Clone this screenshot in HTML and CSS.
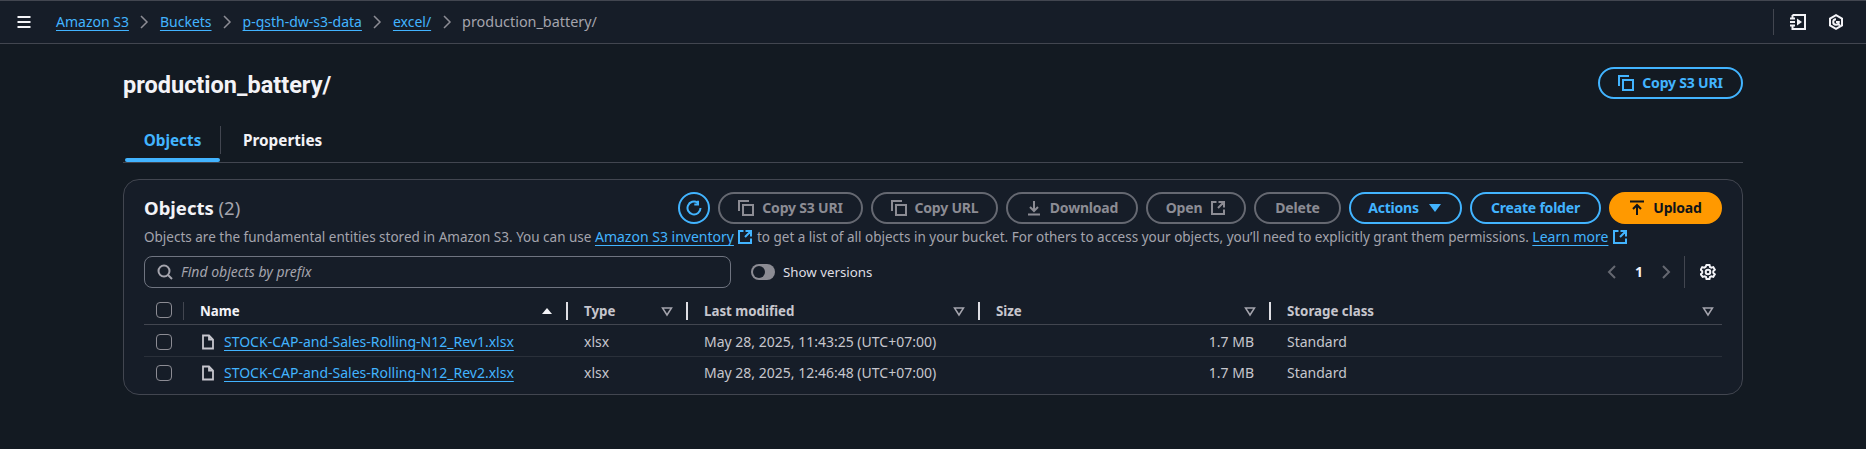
FILE: index.html
```html
<!DOCTYPE html>
<html lang="en">
<head>
  <meta charset="UTF-8">
  <title>production_battery/ - S3 bucket</title>
  <link rel="stylesheet" href="styles.css">
</head>
<body>
  <svg class="defs" width="0" height="0">
    <symbol id="i-copy" viewBox="0 0 16 16"><path d="M1 11V1h10"/><rect x="5" y="5" width="10" height="10"/></symbol>
    <symbol id="i-ext" viewBox="0 0 16 16"><path d="M14 7.500V2H8.500M14 2 8 8M6.500 2H2v12h12V9.500"/></symbol>
    <symbol id="i-download" viewBox="0 0 16 16"><path d="M8 1v10M4 7l4 4 4-4M2 14.500h12"/></symbol>
    <symbol id="i-upload" viewBox="0 0 16 16"><path d="M1 1.500h14M8 5v10M4 9l4-4 4 4"/></symbol>
    <symbol id="i-refresh" viewBox="0 0 16 16"><path d="M14.500 8A6.500 6.500 0 1 1 11.600 2.600M12 .8v3.700H8.300"/></symbol>
    <symbol id="i-file" viewBox="0 0 16 16"><path d="M9 1.500H3v13h10V5.500zM9 1.500v4h4"/></symbol>
    <symbol id="i-filter" viewBox="0 0 16 16"><path d="M3.500 5h9L8 12z"/></symbol>
  </svg>

  <header class="topbar">
    <button class="menu-btn" aria-label="Menu">
      <svg width="16" height="16" viewBox="0 0 16 16" class="ico ico-white"><path d="M1.500 3h13M1.500 8h13M1.500 13h13"/></svg>
    </button>
    <nav class="crumbs">
      <a href="#">Amazon S3</a><svg class="ico crumb-sep" width="16" height="16" viewBox="0 0 16 16"><path d="m5 2 6 6-6 6"/></svg>
      <a href="#">Buckets</a><svg class="ico crumb-sep" width="16" height="16" viewBox="0 0 16 16"><path d="m5 2 6 6-6 6"/></svg>
      <a href="#">p-gsth-dw-s3-data</a><svg class="ico crumb-sep" width="16" height="16" viewBox="0 0 16 16"><path d="m5 2 6 6-6 6"/></svg>
      <a href="#">excel/</a><svg class="ico crumb-sep" width="16" height="16" viewBox="0 0 16 16"><path d="m5 2 6 6-6 6"/></svg>
      <span class="crumb-current">production_battery/</span>
    </nav>
    <div class="top-tools">
      <svg class="ico ico-white" width="16" height="16" viewBox="0 0 16 16"><path d="M2.500 1h12.500v14H2.500V12M2.500 4V1M0 4.500h5M0 8h5M0 11.500h5"/><path class="solid" d="M7 4.500 12 8l-5 3.500z"/></svg>
      <svg class="ico ico-white" width="16" height="16" viewBox="0 0 16 16"><path d="M8 1.200 14 4.500v7L8 14.800 2 11.500v-7z"/><path d="M8 5.200a2.800 2.800 0 1 0 2.800 2.800H8M9.500 9.500l2.500 2"/></svg>
    </div>
  </header>

  <main class="page">
    <div class="title-row">
      <h1>production_battery/</h1>
      <button class="btn btn-line"><svg class="ico"><use href="#i-copy"/></svg>Copy S3 URI</button>
    </div>

    <div class="tabs">
      <a class="tab tab-active" href="#">Objects</a>
      <a class="tab tab-next" href="#">Properties</a>
    </div>

    <section class="panel">
      <div class="panel-head">
        <h2>Objects <span class="count">(2)</span></h2>
        <div class="actions">
          <button class="icon-btn"><svg class="ico"><use href="#i-refresh"/></svg></button>
          <button class="btn btn-off btn-copy"><svg class="ico"><use href="#i-copy"/></svg>Copy S3 URI</button>
          <button class="btn btn-off btn-url"><svg class="ico"><use href="#i-copy"/></svg>Copy URL</button>
          <button class="btn btn-off btn-down"><svg class="ico"><use href="#i-download"/></svg>Download</button>
          <button class="btn btn-off btn-open">Open<svg class="ico"><use href="#i-ext"/></svg></button>
          <button class="btn btn-off btn-del">Delete</button>
          <button class="btn btn-line btn-actions">Actions<svg class="caret" width="16" height="16" viewBox="0 0 16 16"><path d="M2 4h12l-6 8z"/></svg></button>
          <button class="btn btn-line btn-folder">Create folder</button>
          <button class="btn btn-main"><svg class="ico"><use href="#i-upload"/></svg>Upload</button>
        </div>
      </div>

      <p class="desc">Objects are the fundamental entities stored in Amazon S3. You can use <a href="#">Amazon S3 inventory</a> <svg class="ico ico-link"><use href="#i-ext"/></svg> to get a list of all objects in your bucket. For others to access your objects, you’ll need to explicitly grant them permissions. <a href="#">Learn more</a> <svg class="ico ico-link"><use href="#i-ext"/></svg></p>

      <div class="filter-row">
        <div class="search">
          <svg class="ico ico-search" width="16" height="16" viewBox="0 0 16 16"><circle cx="7" cy="7" r="5.500"/><path d="m11 11 4 4"/></svg>
          <span>Find objects by prefix</span>
        </div>
        <div class="toggle"><span class="knob"></span></div>
        <span class="toggle-label">Show versions</span>
        <div class="pager">
          <svg class="ico ico-dim" width="16" height="16" viewBox="0 0 16 16"><path d="m11 2-6 6 6 6"/></svg>
          <span class="page-num">1</span>
          <svg class="ico ico-dim" width="16" height="16" viewBox="0 0 16 16"><path d="m5 2 6 6-6 6"/></svg>
        </div>
        <div class="gear">
          <svg class="ico ico-white" width="16" height="16" viewBox="0 0 16 16"><circle cx="8" cy="8" r="2.300"/><path d="M6.500 1h3l.5 2 1.300.7 2-.6 1.500 2.600-1.500 1.400v1.800l1.500 1.400-1.500 2.600-2-.6-1.300.7-.5 2h-3l-.5-2-1.300-.7-2 .6L.7 10.300l1.500-1.400V7.100L.7 5.700l1.500-2.600 2 .6L5.500 3z"/></svg>
        </div>
      </div>

      <table class="objects">
        <colgroup>
          <col class="c-check"><col class="c-name"><col class="c-type"><col class="c-date"><col class="c-size"><col class="c-class">
        </colgroup>
        <thead>
          <tr>
            <th class="cell-check"><span class="check"></span></th>
            <th class="th-name"><div class="th-in"><span>Name</span><svg class="caret-up" width="16" height="16" viewBox="0 0 16 16"><path d="M3 11h10L8 5z"/></svg></div></th>
            <th><div class="th-in th-dim"><span>Type</span><svg class="ico sort"><use href="#i-filter"/></svg></div></th>
            <th><div class="th-in th-dim"><span>Last modified</span><svg class="ico sort"><use href="#i-filter"/></svg></div></th>
            <th><div class="th-in th-dim"><span>Size</span><svg class="ico sort"><use href="#i-filter"/></svg></div></th>
            <th class="th-last"><div class="th-in th-dim"><span>Storage class</span><svg class="ico sort"><use href="#i-filter"/></svg></div></th>
          </tr>
        </thead>
        <tbody>
          <tr>
            <td class="cell-check"><span class="check"></span></td>
            <td class="td-name"><svg class="ico ico-file"><use href="#i-file"/></svg><a href="#">STOCK-CAP-and-Sales-Rolling-N12_Rev1.xlsx</a></td>
            <td>xlsx</td>
            <td>May 28, 2025, 11:43:25 (UTC+07:00)</td>
            <td class="td-size">1.7 MB</td>
            <td>Standard</td>
          </tr>
          <tr>
            <td class="cell-check"><span class="check"></span></td>
            <td class="td-name"><svg class="ico ico-file"><use href="#i-file"/></svg><a href="#">STOCK-CAP-and-Sales-Rolling-N12_Rev2.xlsx</a></td>
            <td>xlsx</td>
            <td>May 28, 2025, 12:46:48 (UTC+07:00)</td>
            <td class="td-size">1.7 MB</td>
            <td>Standard</td>
          </tr>
        </tbody>
      </table>
    </section>
  </main>
</body>
</html>
```

FILE: styles.css
```css
* {
  box-sizing: border-box;
}
html, body {
  margin: 0;
  height: 100%;
}
body {
  background: #131a22;
  color: #c6c6cd;
  font-family: "Noto Sans", "Open Sans", sans-serif;
  font-size: 14px;
  line-height: 20px;
  overflow: hidden;
}
a {
  color: #42b4ff;
}
.defs {
  position: absolute;
}
.ico {
  width: 16px;
  height: 16px;
  flex: none;
  fill: none;
  stroke: currentColor;
  stroke-width: 2;
}
.ico-white {
  color: #f3f3f7;
}
.solid {
  fill: currentColor;
  stroke: none;
}

/* top bar */
.topbar {
  display: flex;
  align-items: center;
  height: 44px;
  padding-left: 16px;
  padding-right: 22px;
  background: #161d28;
  border-top: 1px solid #424650;
  border-bottom: 1px solid #424650;
}
.menu-btn {
  display: flex;
  padding: 0;
  background: none;
  border: 0;
}
.crumbs {
  display: flex;
  align-items: center;
  margin-left: 24px;
}
.crumbs a {
  text-underline-offset: 3px;
}
.crumb-sep {
  margin: 0 7.500px;
  color: #8c8c94;
  stroke-width: 1.500;
}
.crumb-current {
  color: #a4a4ad;
  font-size: 14.400px;
}
.top-tools {
  display: flex;
  align-items: center;
  gap: 22px;
  height: 26px;
  margin-left: auto;
  padding-left: 16px;
  border-left: 1px solid #424650;
}

/* page */
.page {
  width: 1620px;
  margin-left: 123px;
}
.title-row {
  display: flex;
  align-items: center;
  justify-content: space-between;
  height: 56px;
  margin-top: 11px;
}
h1 {
  margin: 4px 0 0;
  color: #f3f3f7;
  font-family: Roboto, "Noto Sans", sans-serif;
  font-size: 23.500px;
  font-weight: 700;
  line-height: 32px;
}
.btn {
  display: flex;
  align-items: center;
  justify-content: center;
  gap: 8px;
  height: 32px;
  padding: 0 16px;
  border: 2px solid #42b4ff;
  border-radius: 20px;
  background: none;
  color: #42b4ff;
  font: 700 14px/20px "Noto Sans", sans-serif;
  letter-spacing: -0.2px;
}
.title-row .btn {
  width: 145px;
}
.tabs {
  display: flex;
  align-items: flex-start;
  height: 40px;
  margin-top: 12px;
  border-bottom: 1px solid #424650;
}
.tab {
  position: relative;
  display: flex;
  align-items: center;
  justify-content: center;
  height: 28px;
  margin-top: 3px;
  color: #f3f3f7;
  font-size: 15.300px;
  font-weight: 700;
  text-decoration: none;
}
.tab-active {
  width: 96px;
  margin-left: 2px;
  color: #42b4ff;
  border-right: 1px solid #424650;
}
.tab-next {
  margin-left: 22px;
}
.tab-active::after {
  content: "";
  position: absolute;
  left: 0;
  right: 0;
  bottom: -8px;
  height: 4px;
  border-radius: 2px;
  background: #42b4ff;
}

/* panel */
.panel {
  height: 216px;
  margin-top: 16px;
  padding: 12px 20px 0;
  background: #161d28;
  border: 1px solid #424650;
  border-radius: 16px;
}
.panel-head {
  display: flex;
  align-items: center;
  justify-content: space-between;
  height: 32px;
  margin-bottom: 1px;
}
h2 {
  margin: 0;
  color: #f3f3f7;
  font-size: 18.500px;
  line-height: 24px;
  font-weight: 700;
}
.count {
  color: #a4a4ad;
  font-weight: 400;
}
.actions {
  display: flex;
  gap: 8px;
}
.icon-btn {
  display: flex;
  align-items: center;
  justify-content: center;
  width: 32px;
  height: 32px;
  padding: 0;
  border: 2px solid #42b4ff;
  border-radius: 50%;
  background: none;
  color: #42b4ff;
}
.btn-off {
  border-color: #656871;
  color: #8c8c94;
}
.btn-copy { width: 145px; }
.btn-url { width: 127px; }
.btn-down { width: 132px; }
.btn-open { width: 100px; }
.btn-del { width: 87px; }
.btn-actions { width: 113px; }
.btn-folder { width: 131px; }
.btn-main {
  width: 113px;
  border-color: #ff9900;
  background: #ff9900;
  color: #0f141a;
}
.caret {
  fill: #42b4ff;
}
.desc {
  margin: 3px 0 0;
  color: #a4a4ad;
  font-size: 13.500px;
  white-space: nowrap;
}
.desc a {
  font-size: 14px;
  text-underline-offset: 3px;
}
.ico-link {
  color: #42b4ff;
  vertical-align: -3px;
}

/* filter row */
.filter-row {
  display: flex;
  align-items: center;
  height: 32px;
  margin-top: 9px;
}
.search {
  display: flex;
  align-items: center;
  gap: 8px;
  width: 587px;
  height: 32px;
  padding-left: 12px;
  border: 1px solid #6f7480;
  border-radius: 8px;
  color: #a4a4ad;
  font-style: italic;
  font-size: 14px;
}
.ico-search {
  color: #a4a4ad;
}
.toggle {
  width: 24px;
  height: 16px;
  margin-left: 20px;
  padding: 2px;
  border-radius: 8px;
  background: #8c8c94;
}
.knob {
  display: block;
  width: 12px;
  height: 12px;
  border-radius: 50%;
  background: #161d28;
}
.toggle-label {
  margin-left: 8px;
  color: #dedee3;
  font-size: 13.300px;
}
.pager {
  display: flex;
  align-items: center;
  gap: 15px;
  margin-left: auto;
}
.ico-dim {
  color: #656871;
}
.page-num {
  color: #f3f3f7;
  font-weight: 700;
}
.gear {
  display: flex;
  align-items: center;
  height: 32px;
  margin-left: 10px;
  padding-left: 15px;
  padding-right: 6px;
  border-left: 1px solid #424650;
}

/* table */
.objects {
  width: 100%;
  margin-top: 7px;
  table-layout: fixed;
  border-collapse: collapse;
}
.c-check { width: 39px; }
.c-name { width: 383px; }
.c-type { width: 120px; }
.c-date { width: 292px; }
.c-size { width: 291px; }
th {
  height: 29px;
  padding: 4px 0 0;
  border-bottom: 1px solid #424650;
  color: #f3f3f7;
  font-size: 13.300px;
  font-weight: 700;
  text-align: left;
}
.th-in {
  display: flex;
  align-items: center;
  justify-content: space-between;
  height: 18px;
  padding: 0 11px 0 16px;
  border-left: 2px solid #dedee3;
}
.th-name .th-in {
  border-left: 1px solid #424650;
  padding-left: 16px;
}
.th-last .th-in {
  padding-right: 6px;
}
.th-dim {
  color: #c6c6cd;
}
.caret-up {
  fill: #f3f3f7;
}
.sort {
  color: #a4a4ad;
  stroke-width: 1.500;
}
td {
  height: 32px;
  padding: 2px 0 0 18px;
  border-bottom: 1px solid #2a303a;
  color: #c6c6cd;
  font-size: 14px;
}
tbody tr:first-child td {
  padding-top: 4px;
}
tbody tr:last-child td {
  border-bottom: 0;
}
.cell-check {
  padding: 2px 0 0 12px;
}
.check {
  display: block;
  width: 16px;
  height: 16px;
  border: 1px solid #8c8c94;
  border-radius: 4px;
}
.td-name {
  padding-left: 17px;
}
.td-name a {
  text-underline-offset: 3px;
}
.ico-file {
  margin: 0 8px 0 0;
  color: #c6c6cd;
  vertical-align: -3px;
  stroke-width: 1.800;
}
.td-size {
  padding-right: 15px;
  text-align: right;
}
```
